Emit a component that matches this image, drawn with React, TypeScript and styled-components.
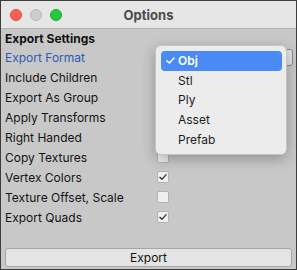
import React from 'react';
import styled, { createGlobalStyle } from 'styled-components';

const GlobalStyle = createGlobalStyle`
  html, body {
    margin: 0;
    padding: 0;
    background: #ffffff;
  }
  * {
    box-sizing: border-box;
  }
`;

const Window = styled.div`
  position: relative;
  width: 297px;
  height: 270px;
  display: flex;
  flex-direction: column;
  border: 1px solid #3c3c3c;
  background: #c8c8c8;
  font-family: Inter, 'Liberation Sans', sans-serif;
  font-size: 12px;
  color: #111111;
  overflow: hidden;
`;

const TitleBar = styled.div`
  position: relative;
  height: 28px;
  flex: none;
  display: flex;
  align-items: center;
  justify-content: center;
  background: #e6e6e6;
  border-bottom: 1px solid #b4b4b4;
`;

const Lights = styled.div`
  position: absolute;
  left: 9px;
  top: 8px;
  display: flex;
  gap: 8px;
`;

const Light = styled.span<{ $color: string; $border: string }>`
  width: 12px;
  height: 12px;
  border-radius: 50%;
  background: ${(p) => p.$color};
  border: 1px solid ${(p) => p.$border};
`;

const Title = styled.div`
  font-weight: 700;
  font-size: 13px;
  color: #4a4a4a;
`;

const Content = styled.div`
  flex: 1;
  display: flex;
  flex-direction: column;
  padding: 0 4px 0 4px;
`;

const Header = styled.div`
  height: 18px;
  display: flex;
  align-items: center;
  font-weight: 700;
  font-size: 12px;
`;

const Row = styled.div`
  height: 20px;
  display: grid;
  grid-template-columns: 152px 1fr;
  align-items: center;
`;

const Label = styled.div<{ $focused?: boolean }>`
  color: ${(p) => (p.$focused ? '#2d5cb3' : '#141414')};
  white-space: nowrap;
`;

const Checkbox = styled.span`
  width: 12px;
  height: 12px;
  display: flex;
  align-items: center;
  justify-content: center;
  background: #f0f0f0;
  border: 1px solid #b3b3b3;
  border-radius: 2px;
`;

const Field = styled.div`
  height: 17px;
  width: 136px;
  border: 1px solid #8a8a8a;
  border-radius: 3px;
  background: #e4e4e4;
`;

const ExportButton = styled.button`
  flex: none;
  height: 19px;
  margin: 0 4px 2px 4px;
  border: 1px solid #a6a6a6;
  border-radius: 3px;
  background: #e4e4e4;
  font-family: Inter, 'Liberation Sans', sans-serif;
  font-size: 12px;
  color: #111111;
  padding: 0;
`;

const Popup = styled.div`
  position: absolute;
  left: 154px;
  top: 44px;
  width: 132px;
  height: 110px;
  padding: 5px 4px 5px 5px;
  background: #ececec;
  border: 1px solid #c4c4c4;
  border-radius: 6px;
  box-shadow: 0 4px 14px rgba(0, 0, 0, 0.28);
  display: flex;
  flex-direction: column;
`;

const Item = styled.div<{ $active?: boolean }>`
  height: 20px;
  display: flex;
  align-items: center;
  padding-left: 4px;
  border-radius: 4px;
  font-size: 12px;
  background: ${(p) => (p.$active ? '#4a8af4' : 'transparent')};
  color: ${(p) => (p.$active ? '#ffffff' : '#1c1c1c')};
  font-weight: ${(p) => (p.$active ? 600 : 400)};
`;

const Check = styled.span`
  width: 13px;
  display: inline-flex;
  align-items: center;
`;

const Tick = ({ color, size }: { color: string; size: number }) => (
  <svg width={size} height={size} viewBox="0 0 12 12">
    <path d="M2.2 6.4 L4.8 8.8 L9.8 3.2" fill="none" stroke={color} strokeWidth={1.6} strokeLinecap="round" strokeLinejoin="round" />
  </svg>
);

type Setting = { label: string; kind: 'dropdown' | 'check'; checked?: boolean; focused?: boolean };

const settings: Setting[] = [
  { label: 'Export Format', kind: 'dropdown', focused: true },
  { label: 'Include Children', kind: 'check' },
  { label: 'Export As Group', kind: 'check' },
  { label: 'Apply Transforms', kind: 'check' },
  { label: 'Right Handed', kind: 'check' },
  { label: 'Copy Textures', kind: 'check' },
  { label: 'Vertex Colors', kind: 'check', checked: true },
  { label: 'Texture Offset, Scale', kind: 'check' },
  { label: 'Export Quads', kind: 'check', checked: true },
];

const formats = ['Obj', 'Stl', 'Ply', 'Asset', 'Prefab'];

const App = () => {
  return (
    <>
      <GlobalStyle />
      <Window>
        <TitleBar>
          <Lights>
            <Light $color="#fe5f57" $border="#e0443e" />
            <Light $color="#cdcdcd" $border="#b9b9b9" />
            <Light $color="#28c840" $border="#1aab29" />
          </Lights>
          <Title>Options</Title>
        </TitleBar>
        <Content>
          <Header>Export Settings</Header>
          {settings.map((s) => (
            <Row key={s.label}>
              <Label $focused={s.focused}>{s.label}</Label>
              {s.kind === 'dropdown' ? (
                <Field />
              ) : (
                <Checkbox>{s.checked && <Tick color="#333333" size={10} />}</Checkbox>
              )}
            </Row>
          ))}
        </Content>
        <ExportButton>Export</ExportButton>
        <Popup>
          {formats.map((f, i) => (
            <Item key={f} $active={i === 0}>
              <Check>{i === 0 && <Tick color="#ffffff" size={11} />}</Check>
              {f}
            </Item>
          ))}
        </Popup>
      </Window>
    </>
  );
};

export default App;
